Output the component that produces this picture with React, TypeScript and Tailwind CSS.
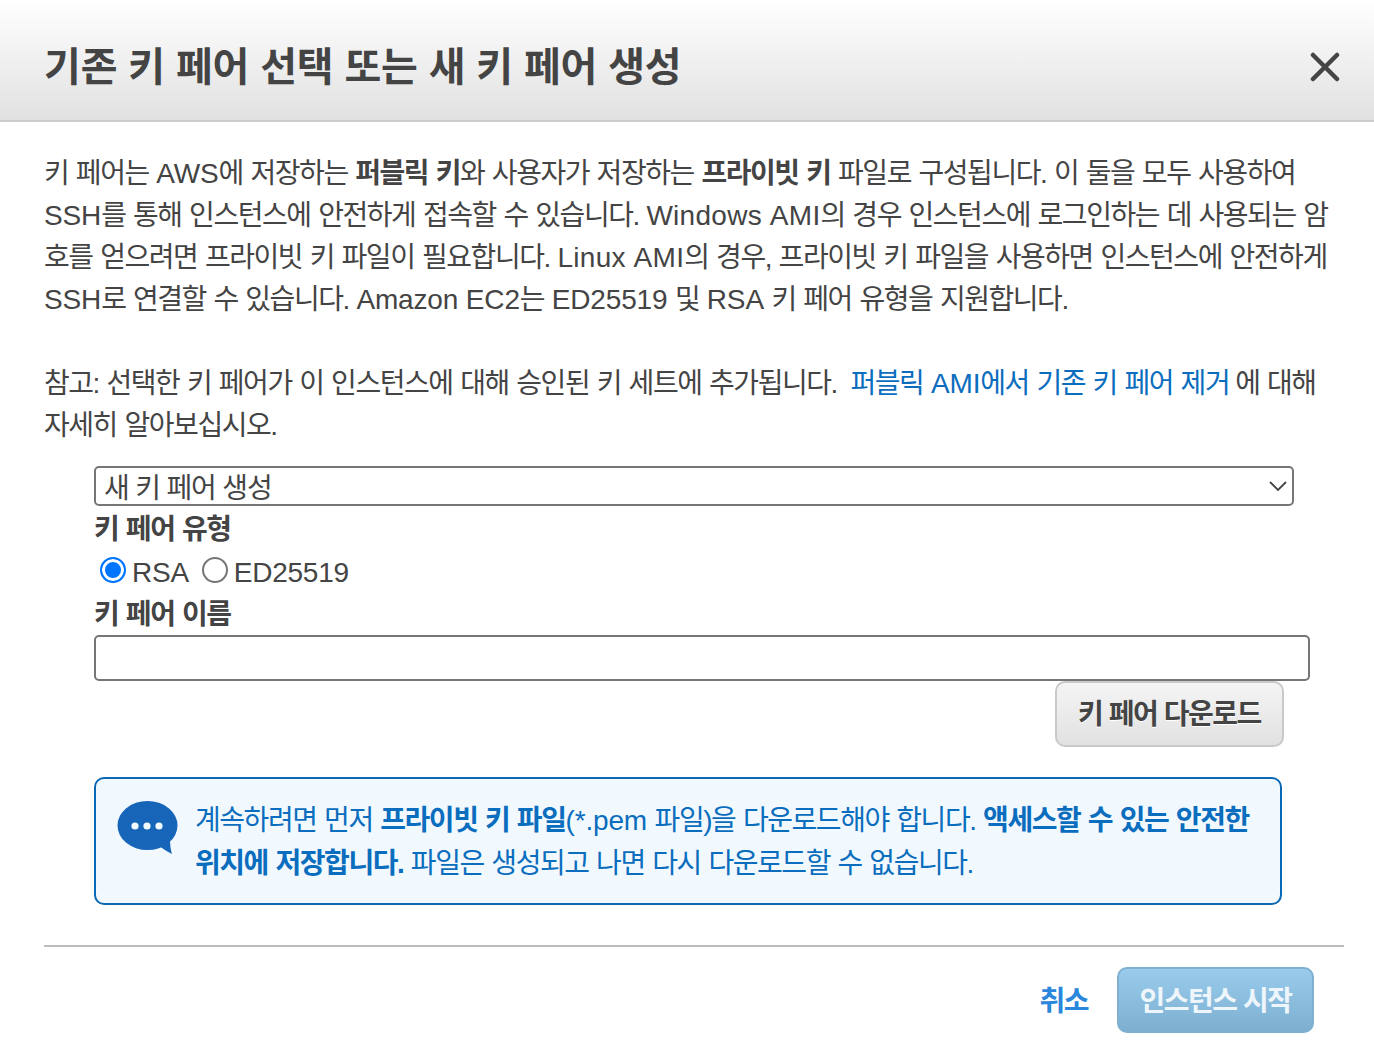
import React from 'react';

// Latin runs sit wider than the hangul in the reference
const L = ({ children }: { children: React.ReactNode }) => (
  <span className="tracking-[-0.15px] [word-spacing:0px]">{children}</span>
);

const App = () => {
  return (
    <div className="w-[1374px] h-[1060px] bg-white overflow-hidden font-['Liberation_Sans','Noto_Sans_CJK_KR',sans-serif] text-[#444444]">

      {/* Header */}
      <div className="h-[122px] flex items-center justify-between pl-[44px] pr-[34px] bg-gradient-to-b from-white to-[#e1e1e1] border-b-2 border-[#cccccc]">
        <h1 className="text-[40px] leading-[48px] font-bold tracking-[-0.15px] whitespace-nowrap mt-[14px]">기존 키 페어 선택 또는 새 키 페어 생성</h1>
        <svg width="30" height="30" viewBox="0 0 30 30" className="text-[#444444] mt-[14px]">
          <path d="M3 3 L27 27 M27 3 L3 27" stroke="currentColor" strokeWidth="4.5" strokeLinecap="round" />
        </svg>
      </div>

      {/* Body */}
      <div className="pt-[31px] px-[44px] text-[28px] leading-[42px] tracking-[-1.45px] [word-spacing:1.2px]">
        <p className="whitespace-nowrap">
          키 페어는 <L>AWS</L>에 저장하는 <b>퍼블릭 키</b>와 사용자가 저장하는 <b>프라이빗 키</b> 파일로 구성됩니다. 이 둘을 모두 사용하여<br />
          <L>SSH</L>를 통해 인스턴스에 안전하게 접속할 수 있습니다. <span className="tracking-[0.3px]">Windows AMI</span>의 경우 인스턴스에 로그인하는 데 사용되는 암<br />
          호를 얻으려면 프라이빗 키 파일이 필요합니다. <span className="tracking-[0.3px]">Linux AMI</span>의 경우, 프라이빗 키 파일을 사용하면 인스턴스에 안전하게<br />
          <L>SSH</L>로 연결할 수 있습니다. <L>Amazon EC2</L>는 <L>ED25519</L> 및 <L>RSA</L> 키 페어 유형을 지원합니다.
        </p>
        <p className="mt-[42px] whitespace-nowrap">
          참고: 선택한 키 페어가 이 인스턴스에 대해 승인된 키 세트에 추가됩니다. <a className="text-[#0b6dbd] ml-[6px]">퍼블릭 <L>AMI</L>에서 기존 키 페어 제거</a><span className="ml-[6px]">에 대해</span><br />
          자세히 알아보십시오.
        </p>

        {/* Form */}
        <div className="mt-[19px] ml-[50px]">
          <div className="relative w-[1200px]">
            <select className="block w-full h-[40px] appearance-none border-2 border-[#767676] rounded-[5px] bg-white pl-[8px] pt-[3px] text-[28px] leading-[36px] tracking-[-1.15px] text-[#444444]">
              <option>새 키 페어 생성</option>
            </select>
            <svg width="18" height="10" viewBox="0 0 18 10" className="absolute right-[7px] top-[15px] text-[#444444]">
              <path d="M1 1 L9 9 L17 1" fill="none" stroke="currentColor" strokeWidth="1.8" />
            </svg>
          </div>

          <div className="font-bold mt-[3px]">키 페어 유형</div>
          <div className="flex items-center h-[44px] tracking-[-0.25px]">
            <input type="radio" name="keytype" defaultChecked className="appearance-none ml-[6px] mr-[6px] w-[26px] h-[26px] rounded-full border-2 border-[#0075ff] bg-[#0075ff] shadow-[inset_0_0_0_3px_white] -mt-[7px]" />
            <span>RSA</span>
            <input type="radio" name="keytype" className="appearance-none ml-[13px] mr-[6px] w-[26px] h-[26px] rounded-full border-2 border-[#767676] bg-white -mt-[7px]" />
            <span>ED25519</span>
          </div>
          <div className="font-bold -mt-[1px]">키 페어 이름</div>
          <input type="text" className="block w-[1216px] h-[46px] -mt-[1px] border-2 border-[#767676] rounded-[5px] bg-white" />

          <div className="w-[1190px] flex justify-end">
            <button className="w-[229px] h-[66px] pt-[2px] rounded-[10px] border-2 border-[#c9c9c9] bg-gradient-to-b from-[#f5f5f5] to-[#e1e1e1] text-[28px] font-bold text-[#444444] [text-shadow:0_1px_0_white]">
              키 페어 다운로드
            </button>
          </div>

          {/* Notice */}
          <div className="w-[1188px] h-[128px] mt-[30px] flex gap-[16px] pl-[21px] pt-[20px] rounded-[10px] border-2 border-[#0b68b3] bg-[#f1f9ff] text-[#0b6dbd]">
            <svg width="62" height="56" viewBox="0 0 62 56" className="shrink-0 mt-[2px]">
              <ellipse cx="30.500" cy="24.5" rx="30" ry="24.5" fill="#1665b8" />
              <path d="M42 45 Q49 50 55 53 Q53 47 53 38 Z" fill="#1665b8" />
              <circle cx="18" cy="25" r="3.600" fill="#f1f9ff" />
              <circle cx="30" cy="25" r="3.600" fill="#f1f9ff" />
              <circle cx="42" cy="25" r="3.600" fill="#f1f9ff" />
            </svg>
            <p className="whitespace-nowrap leading-[43px]">
              계속하려면 먼저 <b>프라이빗 키 파일</b><L>(*.pem</L> 파일)을 다운로드해야 합니다. <b>액세스할 수 있는 안전한</b><br />
              <b>위치에 저장합니다.</b> 파일은 생성되고 나면 다시 다운로드할 수 없습니다.
            </p>
          </div>
        </div>

        <hr className="mt-[40px] w-[1300px] border-t-2 border-[#bdbdbd]" />

        {/* Footer */}
        <div className="w-[1270px] mt-[20px] flex items-center justify-end gap-[29px]">
          <a className="font-bold text-[#2a87dc] pt-[3px]">취소</a>
          <button className="w-[197px] h-[66px] pt-[3px] rounded-[10px] border-2 border-[#7fb0d2] bg-gradient-to-b from-[#99cbec] to-[#7dafd0] text-[28px] font-bold text-[#eef6fb]">
            인스턴스 시작
          </button>
        </div>
      </div>
    </div>
  );
};

export default App;
